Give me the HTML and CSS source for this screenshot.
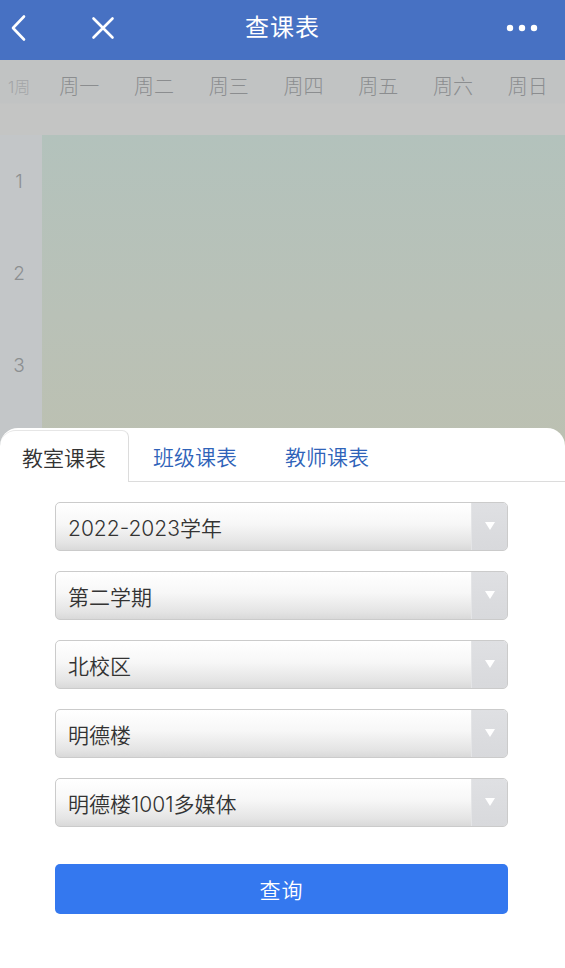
FILE: index.html
```html
<!DOCTYPE html>
<html lang="zh-CN">
<head>
<meta charset="utf-8">
<title>查课表</title>
<link rel="stylesheet" href="styles.css">
</head>
<body>
<div class="page">
  <header class="nav">
    <div class="nav-left">
      <svg class="ic-back" width="20" height="28" viewBox="0 0 20 28"><polyline points="15,2.5 4,14 15,25.5" fill="none" stroke="#fff" stroke-width="2.6" stroke-linecap="round" stroke-linejoin="round"/></svg>
      <svg class="ic-close" width="24" height="24" viewBox="0 0 24 24"><path d="M2.5 2.5 L21.5 21.5 M21.5 2.5 L2.5 21.5" stroke="#fff" stroke-width="2.6" stroke-linecap="round"/></svg>
    </div>
    <h1 class="title">查课表</h1>
    <div class="nav-right">
      <svg class="ic-more" width="32" height="8" viewBox="0 0 32 8"><circle cx="4" cy="4" r="3.2" fill="#fff"/><circle cx="16" cy="4" r="3.2" fill="#fff"/><circle cx="28" cy="4" r="3.2" fill="#fff"/></svg>
    </div>
  </header>

  <section class="schedule">
    <div class="week-row">
      <div class="wk-label">1周</div>
      <div class="day">周一</div>
      <div class="day">周二</div>
      <div class="day">周三</div>
      <div class="day">周四</div>
      <div class="day">周五</div>
      <div class="day">周六</div>
      <div class="day">周日</div>
    </div>
    <div class="grid-body">
      <div class="row-labels">
        <div class="rl">1</div>
        <div class="rl">2</div>
        <div class="rl">3</div>
      </div>
      <div class="grid-fill"></div>
    </div>
  </section>

  <div class="sheet">
    <div class="tabs">
      <div class="tab active">教室课表</div>
      <div class="tab">班级课表</div>
      <div class="tab">教师课表</div>
      <div class="tab-rest"></div>
    </div>
    <div class="form">
      <div class="select"><span class="sel-text">2022-2023学年</span><span class="sel-arrow"></span></div>
      <div class="select"><span class="sel-text">第二学期</span><span class="sel-arrow"></span></div>
      <div class="select"><span class="sel-text">北校区</span><span class="sel-arrow"></span></div>
      <div class="select"><span class="sel-text">明德楼</span><span class="sel-arrow"></span></div>
      <div class="select"><span class="sel-text">明德楼1001多媒体</span><span class="sel-arrow"></span></div>
      <button class="btn" type="button">查询</button>
    </div>
  </div>
</div>
</body>
</html>
```

FILE: styles.css
```css
* { box-sizing: border-box; }
html, body {
  margin: 0;
  padding: 0;
}
body {
  width: 565px;
  height: 968px;
  overflow: hidden;
  font-family: "Inter", "Noto Sans CJK SC", "Noto Sans", sans-serif;
  font-weight: 350;
  background: #c3c5c6;
}
.page {
  position: relative;
  width: 565px;
  height: 968px;
  overflow: hidden;
}

/* nav */
.nav {
  height: 60px;
  background: #4771c3;
  display: grid;
  grid-template-columns: 1fr auto 1fr;
  align-items: center;
  padding-bottom: 5px;
}
.nav-left {
  display: flex;
  align-items: center;
  padding-left: 9px;
  gap: 62px;
}
.ic-back, .ic-close { display: block; }
.title {
  margin: 0;
  color: #fff;
  font-size: 24px;
  font-weight: 400;
  line-height: 30px;
  letter-spacing: 1px;
}
.nav-right {
  display: flex;
  justify-content: flex-end;
  padding-right: 27px;
}
.ic-more { display: block; }

/* schedule */
.schedule {
  display: flex;
  flex-direction: column;
}
.week-row {
  height: 75px;
  display: flex;
  align-items: flex-start;
  padding-top: 14px;
  background: linear-gradient(#c1c3c3 0px, #c1c3c3 43px, #c4c5c4 44px, #c4c5c4 75px);
}
.wk-label {
  width: 42px;
  font-size: 16px;
  font-weight: 300;
  line-height: 26px;
  color: #a3a5a7;
  padding-left: 8px;
}
.day {
  flex: 1;
  text-align: center;
  font-size: 20px;
  font-weight: 300;
  line-height: 26px;
  color: #8b8d8f;
}
.grid-body {
  display: flex;
  height: 400px;
}
.row-labels {
  width: 42px;
  background: #c3c6c8;
  display: flex;
  flex-direction: column;
}
.rl {
  height: 92px;
  display: flex;
  align-items: center;
  justify-content: center;
  font-size: 19px;
  font-weight: 300;
  color: #8c8f91;
  padding-right: 4px;
}
.grid-fill {
  flex: 1;
  background: linear-gradient(#b3c2bc 0%, #b9c1b7 45%, #bec0ae 100%);
}

/* bottom sheet */
.sheet {
  position: absolute;
  left: 0;
  right: 0;
  bottom: 0;
  height: 540px;
  background: #fff;
  border-radius: 18px 18px 0 0;
  padding-top: 2px;
}
.tabs {
  display: flex;
  height: 52px;
}
.tab {
  height: 52px;
  padding: 0 24px;
  display: flex;
  align-items: center;
  font-size: 21px;
  color: #2f63b9;
  border-bottom: 1px solid #dcdcdc;
}
.tab.active {
  width: 129px;
  padding: 0 0 0 22px;
  color: #333;
  border-bottom: none;
  border-right: 1px solid #dcdcdc;
  border-top: 1px solid #e6e6e6;
  border-radius: 16px 7px 0 0;
}
.tab-rest {
  flex: 1;
  border-bottom: 1px solid #dcdcdc;
}

.form {
  padding: 20px 57px 0 55px;
  display: flex;
  flex-direction: column;
  gap: 20px;
}
.select {
  height: 49px;
  display: flex;
  border: 1px solid #cbcbcb;
  border-radius: 5px;
  overflow: hidden;
  background: linear-gradient(#ffffff 0%, #f7f7f7 45%, #e4e4e4 85%, #d9d9d9 100%);
}
.sel-text {
  flex: 1;
  display: flex;
  align-items: center;
  padding-left: 12px;
  font-size: 21px;
  color: #333;
}
.sel-arrow {
  width: 36px;
  background: linear-gradient(#dfe0e3, #d8d9dc);
  border-left: 1px solid #e4e5e7;
  display: flex;
  align-items: center;
  justify-content: center;
}
.sel-arrow::before {
  content: "";
  width: 0;
  height: 0;
  border-left: 5px solid transparent;
  border-right: 5px solid transparent;
  border-top: 8px solid #fff;
  margin-bottom: 2px;
}
.btn {
  margin-top: 17px;
  height: 50px;
  border: none;
  border-radius: 5px;
  background: #3478ef;
  color: #fff;
  font-family: "Inter", "Noto Sans CJK SC", "Noto Sans", sans-serif;
  font-weight: 350;
  font-size: 21px;
  letter-spacing: 1px;
}
```
